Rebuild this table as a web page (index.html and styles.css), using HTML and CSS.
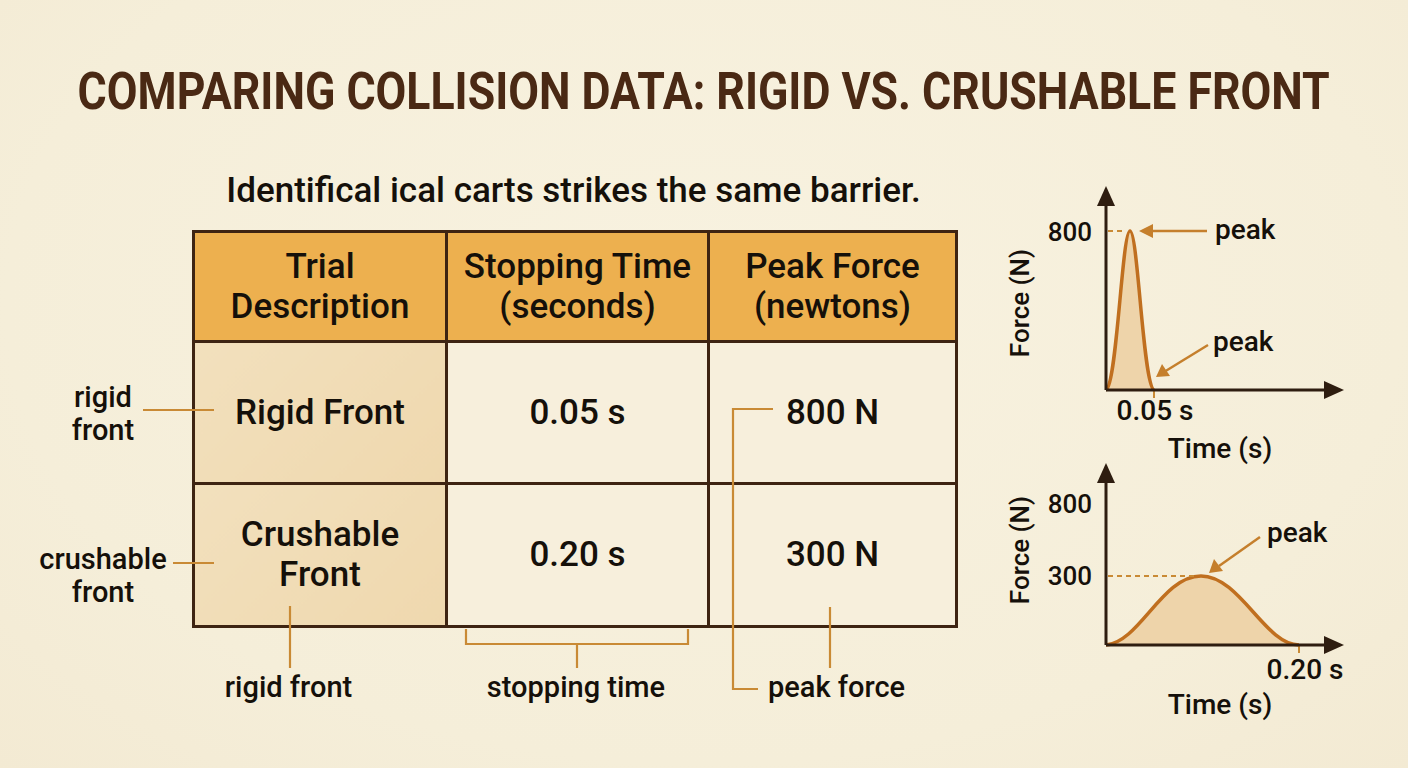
FILE: index.html
```html
<!DOCTYPE html>
<html lang="en">
<head>
<meta charset="utf-8">
<title>Comparing Collision Data</title>
<link rel="stylesheet" href="styles.css">
</head>
<body>
<div class="page">
  <h1 class="title"><span>COMPARING COLLISION DATA: RIGID VS. CRUSHABLE FRONT</span></h1>
  <div class="main">
    <div class="figure">
      <p class="subtitle">Identifical ical carts strikes the same barrier.</p>
      <div class="side-labels">
        <div></div>
        <div class="side-label">rigid<br>front</div>
        <div class="side-label low">crushable<br>front</div>
      </div>
      <table class="data">
        <thead>
          <tr>
            <th class="c1">Trial<br>Description</th>
            <th class="c2">Stopping Time<br>(seconds)</th>
            <th class="c3">Peak Force<br>(newtons)</th>
          </tr>
        </thead>
        <tbody>
          <tr class="r1">
            <td class="trial">Rigid Front</td>
            <td>0.05 s</td>
            <td>800 N</td>
          </tr>
          <tr class="r2">
            <td class="trial">Crushable<br>Front</td>
            <td>0.20 s</td>
            <td>300 N</td>
          </tr>
        </tbody>
      </table>
      <div class="bottom-labels">
        <span class="bl bl1">rigid front</span>
        <span class="bl bl2">stopping time</span>
        <span class="bl bl3">peak force</span>
      </div>
    </div>
    <div class="charts">
      <svg class="chart chart-top" width="380" height="280" viewBox="0 0 380 280">
        <text class="ylabel" transform="translate(39 123) rotate(-90)" text-anchor="middle">Force (N)</text>
        <path class="fill" d="M116 210 C127 205 132 51 140 51 C148 51 153 205 164 210 Z"/>
        <path class="curve" d="M116 210 C127 205 132 51 140 51 C148 51 153 205 164 210"/>
        <line class="dash" x1="118" y1="51" x2="136" y2="51"/>
        <line class="tick" x1="164" y1="210" x2="164" y2="218"/>
        <line class="axis" x1="116" y1="210" x2="116" y2="22"/>
        <line class="axis" x1="116" y1="210" x2="340" y2="210"/>
        <polygon class="arrowhead" points="116,6 107,26 125,26"/>
        <polygon class="arrowhead" points="354,210 334,201 334,219"/>
        <text class="num" x="102" y="61" text-anchor="end">800</text>
        <line class="pointer" x1="217" y1="51" x2="158" y2="51"/>
        <polygon class="pointer-head" points="149,51 163,44 163,58"/>
        <text x="225" y="59">peak</text>
        <line class="pointer" x1="218" y1="165" x2="174" y2="192"/>
        <polygon class="pointer-head" points="166,197 172,184 180,196"/>
        <text x="223" y="171">peak</text>
        <text x="165" y="240" text-anchor="middle">0.05 s</text>
        <text x="230" y="278" text-anchor="middle">Time (s)</text>
      </svg>
      <svg class="chart chart-bottom" width="380" height="270" viewBox="0 0 380 270">
        <text class="ylabel" transform="translate(39 90) rotate(-90)" text-anchor="middle">Force (N)</text>
        <path class="fill" d="M116 185 C150 182 172 116 211 116 C250 116 275 185 309 185 Z"/>
        <path class="curve" d="M116 185 C150 182 172 116 211 116 C250 116 275 185 309 185"/>
        <line class="dash" x1="118" y1="116" x2="205" y2="116"/>
        <line class="tick" x1="309" y1="185" x2="309" y2="193"/>
        <line class="axis" x1="116" y1="185" x2="116" y2="20"/>
        <line class="axis" x1="116" y1="185" x2="340" y2="185"/>
        <polygon class="arrowhead" points="116,3 107,23 125,23"/>
        <polygon class="arrowhead" points="354,185 334,176 334,194"/>
        <text class="num" x="102" y="53" text-anchor="end">800</text>
        <text class="num" x="102" y="125" text-anchor="end">300</text>
        <line class="pointer" x1="270" y1="77" x2="229" y2="106"/>
        <polygon class="pointer-head" points="219,113 224,99 233,111"/>
        <text x="277" y="82">peak</text>
        <text x="315" y="219" text-anchor="middle">0.20 s</text>
        <text x="230" y="254" text-anchor="middle">Time (s)</text>
      </svg>
    </div>
  </div>
  <svg class="connectors" width="1408" height="768" viewBox="0 0 1408 768" aria-hidden="true">
    <path d="M143 410 H214"/>
    <path d="M173 563 H214"/>
    <path d="M290 606 V668"/>
    <path d="M466 629 V644 H688 V629 M577 644 V668"/>
    <path d="M773 409 H733 V689 H758"/>
    <path d="M830 607 V668"/>
  </svg>
</div>
</body>
</html>
```

FILE: styles.css
```css
* { box-sizing: border-box; }
html, body {
  margin: 0;
  padding: 0;
}
body {
  background: #f6efdb;
  font-family: Roboto, "Noto Sans", "Liberation Sans", sans-serif;
  color: #15100a;
}
.page {
  position: relative;
  width: 1408px;
  height: 768px;
  overflow: hidden;
  background: radial-gradient(ellipse at 50% 40%, #f8f2e0 0%, #f5eed9 70%, #f3ead3 100%);
}
.title {
  display: flex;
  justify-content: center;
  margin: 66px 0 0;
  height: 52px;
  font-size: 52px;
  line-height: 52px;
  font-weight: 700;
  color: #4a2914;
  white-space: nowrap;
}
.title span {
  display: block;
  flex: none;
  transform: scaleX(0.858);
  transform-origin: center;
}
.main {
  display: flex;
  margin-top: 52px;
}
.figure {
  width: 990px;
  display: grid;
  grid-template-columns: 192px 763px;
  grid-template-rows: 60px 395px 90px;
}
.subtitle {
  grid-column: 2;
  grid-row: 1;
  margin: 0;
  padding-top: 1px;
  font-size: 35px;
  line-height: 40px;
  font-weight: 500;
  text-align: center;
  white-space: nowrap;
}
.side-labels {
  grid-column: 1;
  grid-row: 2;
  display: grid;
  grid-template-rows: 110px 142px 143px;
}
.side-label {
  width: 206px;
  text-align: center;
  font-size: 29px;
  line-height: 33px;
  font-weight: 500;
  padding-top: 41px;
}
.side-labels .side-label.low {
  padding-top: 61px;
}
.data {
  grid-column: 2;
  grid-row: 2;
  width: 763px;
  height: 395px;
  border-collapse: collapse;
  table-layout: fixed;
  border: 3px solid #3e2412;
}
.data th, .data td {
  border: 3px solid #3e2412;
  text-align: center;
  vertical-align: middle;
  padding: 0;
}
.data th {
  background: #edb04f;
  height: 110px;
  font-size: 35px;
  line-height: 40px;
  font-weight: 500;
  color: #15100a;
}
.data .c1 { width: 253px; }
.data .c2 { width: 262px; }
.data .c3 { width: 248px; }
.data td {
  background: #f7efdc;
  font-size: 35px;
  line-height: 40px;
  font-weight: 500;
}
.data .r1 td { height: 142px; }
.data .r2 td { height: 143px; }
.data td.trial {
  background: linear-gradient(135deg, #f2e0bd 0%, #efd8ae 100%);
}
.bottom-labels {
  grid-column: 2;
  grid-row: 3;
  display: grid;
  grid-template-columns: 253px 262px 248px;
  padding-top: 46px;
  font-size: 29px;
  line-height: 33px;
  font-weight: 500;
}
.bl { text-align: center; white-space: nowrap; }
.bl1 { padding-right: 60px; }
.bl3 { padding-left: 61px; text-align: left; }
.charts {
  display: flex;
  flex-direction: column;
  padding-top: 10px;
}
.chart {
  display: block;
  overflow: visible;
  font-family: Roboto, "Noto Sans", sans-serif;
  font-size: 28px;
  font-weight: 500;
}
.chart .num { font-size: 26px; }
.chart .ylabel { font-size: 26px; }
.chart text { fill: #15100a; }
.chart .axis { stroke: #2e1d10; stroke-width: 3; }
.chart .arrowhead { fill: #2e1d10; }
.chart .curve { fill: none; stroke: #c06f1f; stroke-width: 3.5; }
.chart .fill { fill: #eed4aa; stroke: none; }
.chart .dash { stroke: #c98a35; stroke-width: 1.8; stroke-dasharray: 5 4; }
.chart .tick { stroke: #c98a35; stroke-width: 2; }
.chart .pointer { stroke: #c57f2c; stroke-width: 2.5; }
.chart .pointer-head { fill: #c57f2c; }
.connectors {
  position: absolute;
  left: 0;
  top: 0;
  pointer-events: none;
}
.connectors path {
  fill: none;
  stroke: #c98a35;
  stroke-width: 2.2;
}
```
